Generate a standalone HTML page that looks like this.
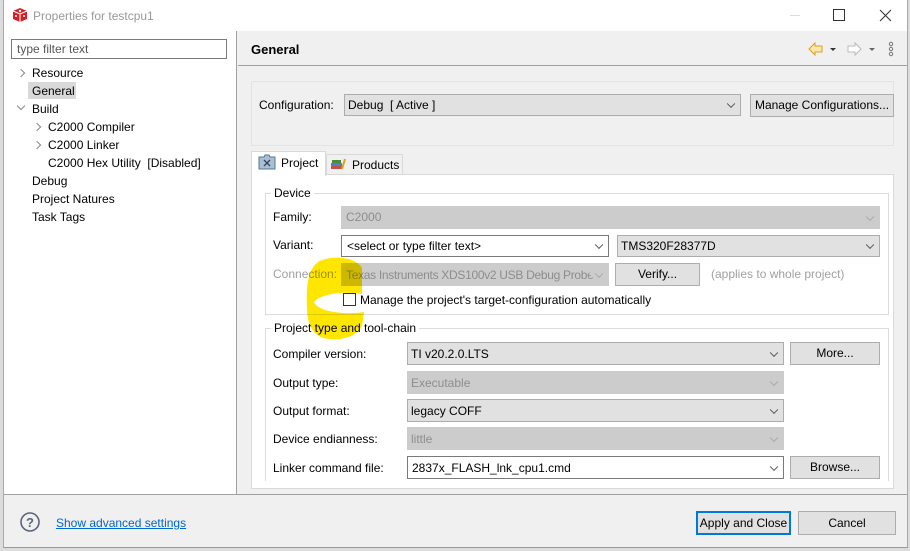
<!DOCTYPE html><html><head><style>
*{box-sizing:border-box;margin:0;padding:0}
body{width:910px;height:551px;position:relative;overflow:hidden;background:#f0f0f0;font-family:"Liberation Sans",sans-serif;font-size:12px;color:#000}
.a{position:absolute}
.t{position:absolute;white-space:nowrap;line-height:14px}
.cb{position:absolute;background:#e1e1e1;border:1px solid #adadad}
.dis{position:absolute;background:#cccccc;border:1px solid #cccccc;color:#8d8d8d}
.wh{position:absolute;background:#fff;border:1px solid #7a7a7a}
.btn{position:absolute;background:#e1e1e1;border:1px solid #adadad;text-align:center}
.v{position:absolute;right:6px;top:50%;width:6px;height:6px;border-right:1px solid #555;border-bottom:1px solid #555;transform:translateY(-70%) rotate(45deg)}
.dis .v{border-color:#a8a8a8}
.grp{position:absolute;border:1px solid #dcdcdc}
.chev{position:absolute;width:6px;height:6px;border-right:1.5px solid #888;border-bottom:1.5px solid #888;transform:rotate(-45deg)}
</style></head><body>
<div class="a" style="left:0;top:0;width:910px;height:551px;background:#dcdcdc"></div>
<div class="a" style="left:3px;top:0;width:905px;height:548px;background:#f0f0f0;border-left:1px solid #aaa;border-right:1px solid #aaa;border-bottom:1px solid #999"></div>
<div class="a" style="left:4px;top:0;width:903px;height:31px;background:#fff"></div>
<svg class="a" style="left:12px;top:7px" width="16" height="16" viewBox="0 0 16 16"><path d="M8 1 L15 4 L15 12 L8 15 L1 12 L1 4Z" fill="#d32027"/><path d="M1 4 L8 7 L15 4 M8 7 L8 15" stroke="#fff" stroke-width="1" fill="none"/><circle cx="8" cy="4" r="1.2" fill="#fff"/><circle cx="4" cy="9" r="1" fill="#fff"/><circle cx="12" cy="9" r="1" fill="#fff"/></svg>
<div class="t" style="left:33px;top:9px;color:#999;font-size:12px">Properties for testcpu1</div>
<div class="a" style="left:790px;top:15px;width:10px;height:1px;background:#ddd"></div>
<div class="a" style="left:833px;top:9px;width:12px;height:12px;border:1px solid #333"></div>
<svg class="a" style="left:879px;top:9px" width="13" height="13"><path d="M1 1L12 12M12 1L1 12" stroke="#333"/></svg>
<!-- left panel -->
<div class="a" style="left:4px;top:31px;width:233px;height:463px;background:#fff;border-right:1px solid #a0a0a0"></div>
<div class="a" style="left:11px;top:39px;width:216px;height:20px;border:1px solid #7a7a7a;background:#fff"></div>
<div class="t" style="left:17px;top:42px;color:#555">type filter text</div>
<div class="a" style="left:28px;top:82px;width:48px;height:17px;background:#d9d9d9"></div>
<div class="chev" style="left:18px;top:70px"></div>
<div class="t" style="left:32px;top:66px">Resource</div>
<div class="t" style="left:32px;top:84px">General</div>
<div class="chev" style="left:18px;top:103px;transform:rotate(45deg)"></div>
<div class="t" style="left:32px;top:102px">Build</div>
<div class="chev" style="left:34px;top:124px"></div>
<div class="t" style="left:48px;top:120px">C2000 Compiler</div>
<div class="chev" style="left:34px;top:142px"></div>
<div class="t" style="left:48px;top:138px">C2000 Linker</div>
<div class="t" style="left:48px;top:156px">C2000 Hex Utility &nbsp;[Disabled]</div>
<div class="t" style="left:32px;top:174px">Debug</div>
<div class="t" style="left:32px;top:192px">Project Natures</div>
<div class="t" style="left:32px;top:210px">Task Tags</div>
<!-- header -->
<div class="t" style="left:251px;top:43px;font-weight:bold;font-size:13px">General</div>
<div class="a" style="left:238px;top:65px;width:669px;height:1px;background:#a0a0a0"></div>
<svg class="a" style="left:807px;top:41px" width="90" height="18"><path d="M2 8L8 2V5H15V11H8V14Z" fill="#fce8a8" stroke="#d9a02a"/><path d="M23 7h6l-3 3z" fill="#333"/><path d="M54 8L48 2V5H41V11H48V14Z" fill="#fff" stroke="#bbb"/><path d="M62 7h6l-3 3z" fill="#666"/><circle cx="84" cy="3" r="1.7" fill="none" stroke="#777"/><circle cx="84" cy="8" r="1.7" fill="none" stroke="#777"/><circle cx="84" cy="13" r="1.7" fill="none" stroke="#777"/></svg>
<!-- config -->
<div class="grp" style="left:251px;top:81px;width:643px;height:65px;border-color:#e3e3e3"></div>
<div class="t" style="left:259px;top:98px">Configuration:</div>
<div class="cb" style="left:344px;top:94px;width:397px;height:22px"><span class="t" style="left:3px;top:3px">Debug &nbsp;[ Active ]</span><i class="v"></i></div>
<div class="btn" style="left:750px;top:94px;width:144px;height:23px;line-height:21px">Manage Configurations...</div>
<!-- tabs -->
<div class="a" style="left:251px;top:174px;width:643px;height:315px;background:#fff;border:1px solid #d9d9d9"></div>
<div class="a" style="left:326px;top:154px;width:77px;height:21px;background:#f0f0f0;border:1px solid #d9d9d9"></div>
<div class="a" style="left:251px;top:151px;width:75px;height:25px;background:#fff;border:1px solid #d9d9d9;border-bottom:none"></div>
<svg class="a" style="left:258px;top:154px" width="18" height="16"><path d="M1 3h5l1-2h4l1 2h5v12H1z" fill="#a9bfd6" stroke="#5a7590"/><path d="M6 6l6 6M12 6l-6 6" stroke="#345" stroke-width="1.3"/></svg>
<div class="t" style="left:281px;top:156px">Project</div>
<svg class="a" style="left:330px;top:157px" width="17" height="14"><rect x="1" y="9" width="11" height="3" fill="#c0504d"/><rect x="1" y="6" width="11" height="3" fill="#4f81bd"/><rect x="2" y="3" width="9" height="3" fill="#4a8a3a"/><path d="M12 12L15 2" stroke="#e0a020" stroke-width="2"/></svg>
<div class="t" style="left:352px;top:158px">Products</div>
<!-- device -->
<div class="grp" style="left:265px;top:193px;width:624px;height:122px"></div>
<div class="t" style="left:271px;top:186px;background:#fff;padding:0 3px">Device</div>
<div class="t" style="left:273px;top:210px">Family:</div>
<div class="dis" style="left:341px;top:206px;width:539px;height:23px"><span class="t" style="left:4px;top:3px">C2000</span><i class="v"></i></div>
<div class="t" style="left:273px;top:238px">Variant:</div>
<div class="wh" style="left:341px;top:235px;width:268px;height:22px"><span class="t" style="left:5px;top:3px">&lt;select or type filter text&gt;</span><i class="v"></i></div>
<div class="cb" style="left:617px;top:235px;width:263px;height:22px"><span class="t" style="left:3px;top:3px">TMS320F28377D</span><i class="v"></i></div>
<div class="t" style="left:273px;top:267px;color:#a0a0a0">Connection:</div>
<div class="dis" style="left:341px;top:263px;width:268px;height:23px;overflow:hidden"><span class="t" style="left:4px;top:4px;letter-spacing:-0.3px">Texas Instruments XDS100v2 USB Debug Probe</span><i class="v" style="background:#ccc;box-shadow:0 0 0 4px #ccc"></i></div>
<div class="btn" style="left:615px;top:263px;width:85px;height:23px;line-height:21px">Verify...</div>
<div class="t" style="left:711px;top:267px;color:#a0a0a0">(applies to whole project)</div>
<div class="a" style="left:343px;top:293px;width:13px;height:13px;border:1px solid #333;background:#fff"></div>
<div class="t" style="left:360px;top:293px">Manage the project's target-configuration automatically</div>
<!-- project type -->
<div class="grp" style="left:265px;top:328px;width:624px;height:153px;border-bottom:none"></div>
<div class="t" style="left:271px;top:321px;background:#fff;padding:0 3px">Project type and tool-chain</div>
<div class="t" style="left:273px;top:347px">Compiler version:</div>
<div class="cb" style="left:407px;top:342px;width:377px;height:23px"><span class="t" style="left:3px;top:4px">TI v20.2.0.LTS</span><i class="v"></i></div>
<div class="btn" style="left:790px;top:342px;width:90px;height:23px;line-height:21px">More...</div>
<div class="t" style="left:273px;top:376px">Output type:</div>
<div class="dis" style="left:407px;top:371px;width:377px;height:23px"><span class="t" style="left:3px;top:4px">Executable</span><i class="v"></i></div>
<div class="t" style="left:273px;top:404px">Output format:</div>
<div class="cb" style="left:407px;top:399px;width:377px;height:23px"><span class="t" style="left:3px;top:4px">legacy COFF</span><i class="v"></i></div>
<div class="t" style="left:273px;top:432px">Device endianness:</div>
<div class="dis" style="left:407px;top:427px;width:377px;height:23px"><span class="t" style="left:3px;top:4px">little</span><i class="v"></i></div>
<div class="t" style="left:273px;top:461px">Linker command file:</div>
<div class="wh" style="left:407px;top:456px;width:377px;height:23px"><span class="t" style="left:4px;top:4px">2837x_FLASH_lnk_cpu1.cmd</span><i class="v"></i></div>
<div class="btn" style="left:790px;top:456px;width:90px;height:23px;line-height:21px">Browse...</div>
<!-- bottom -->
<div class="a" style="left:4px;top:494px;width:903px;height:1px;background:#a0a0a0"></div>
<svg class="a" style="left:19px;top:511px" width="22" height="22"><circle cx="11" cy="11" r="9" fill="none" stroke="#5a6478" stroke-width="1.6"/><text x="11" y="16" text-anchor="middle" font-family="Liberation Sans" font-weight="bold" font-size="13" fill="#5a6478">?</text></svg>
<div class="t" style="left:56px;top:516px;color:#0066cc;text-decoration:underline">Show advanced settings</div>
<div class="btn" style="left:696px;top:511px;width:95px;height:24px;line-height:20px;border:2px solid #0078d7">Apply and Close</div>
<div class="btn" style="left:798px;top:511px;width:98px;height:24px;line-height:22px">Cancel</div>
<!-- highlight -->
<svg class="a" style="left:0;top:0;mix-blend-mode:multiply" width="910" height="551"><path fill="#ffe600" d="M318 262 C330 255 355 256 362 268 L362 294 C345 291 322 293 314 302 C318 312 345 315 364 312 L362 326 C356 336 345 340 330 339 C315 338 308 328 307 310 C306 285 308 270 318 262Z"/></svg>
</body></html>
